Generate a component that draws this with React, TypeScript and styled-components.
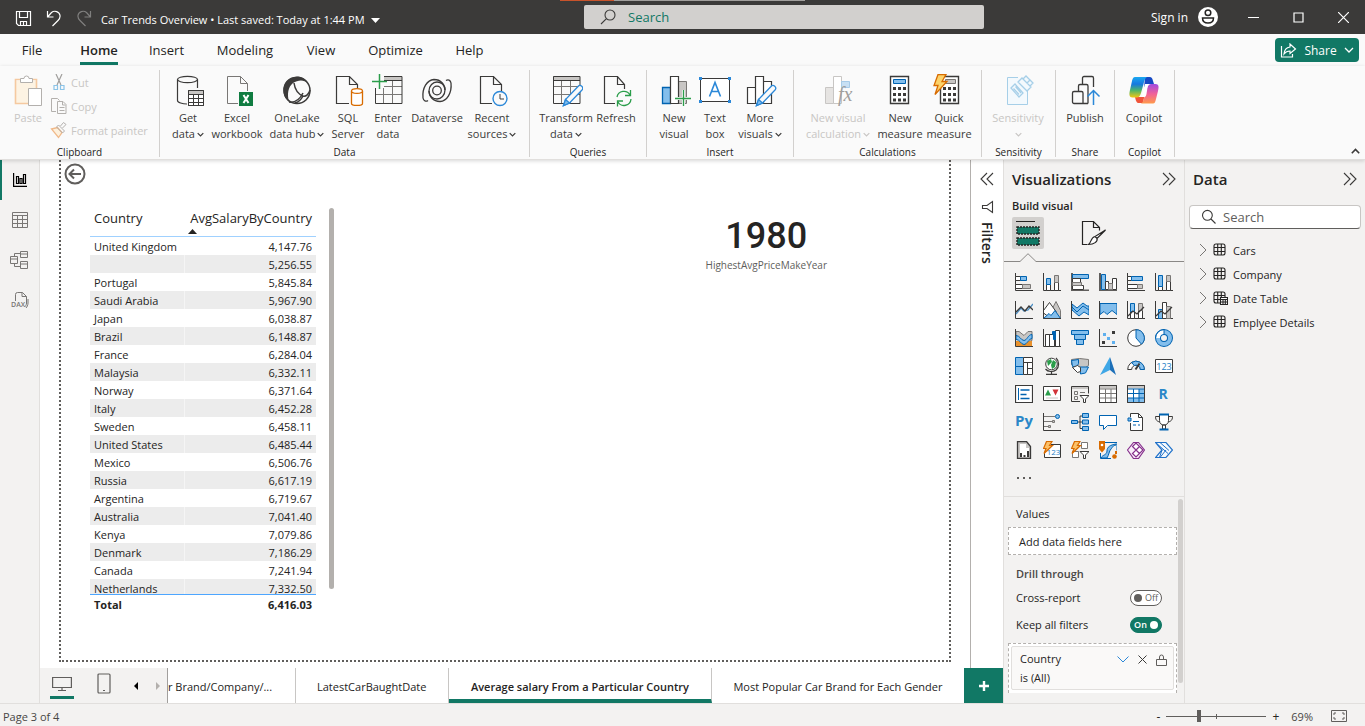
import React from "react";
import styled, { createGlobalStyle, css } from "styled-components";

const green = "#117865";
const ink = "#252423";
const line = "#3b3a39";
const pane = "#f3f2f1";
const blue = "#83beec";
const edge = "#0063b1";
const grey = "#c8c6c4";
const greyEdge = "#797775";
const orange = "#d86b00";

const GlobalStyle = createGlobalStyle`
  * { box-sizing: border-box; }
  body { margin: 0; background: #fff; }
  body, button, input { font-family: "Open Sans", "Noto Sans", sans-serif; font-size: 12px; color: ${ink}; }
  button { border: 0; padding: 0; margin: 0; background: none; cursor: pointer; }
  h2, h3, p, ul { margin: 0; padding: 0; font-weight: 400; }
  svg { display: block; flex: none; }
`;

const Shell = styled.div`
  display: flex;
  flex-direction: column;
  height: 100vh;
  overflow: hidden;
`;

/* ---------- title bar ---------- */
const TitleBar = styled.header`
  display: grid;
  grid-template-columns: 584fr 400fr 381fr;
  align-items: center;
  height: 34px;
  flex: none;
  background: linear-gradient(90deg, transparent 41%, #c8532b 41% 45%, #a19f9d 45% 59%, transparent 59%) 0 0 / 100% 1px no-repeat
    #3b3a39;
  color: #fff;
`;
const QuickAccess = styled.div`
  display: flex;
  align-items: center;
  gap: 14px;
  padding: 2px 0 0 15px;
`;
const BarButton = styled.button<{ $dim?: boolean }>`
  display: flex;
  color: #fff;
  opacity: ${(p) => (p.$dim ? 0.35 : 1)};
`;
const DocTitle = styled.button`
  display: flex;
  align-items: center;
  gap: 6px;
  padding-top: 4px;
  margin-left: -5px;
  color: #fff;
  font-size: 11px;
  line-height: 16px;
  white-space: nowrap;
`;
const TopSearch = styled.label`
  display: flex;
  align-items: center;
  gap: 12px;
  height: 24px;
  padding: 0 16px;
  border-radius: 2px;
  background: #d2d0ce;
`;
const TopSearchInput = styled.input`
  flex: 1;
  border: 0;
  padding: 0;
  background: none;
  outline: 0;
  font-size: 13px;
  &::placeholder { color: ${green}; opacity: 1; }
`;
const WindowControls = styled.div`
  display: flex;
  justify-content: flex-end;
  align-items: center;
  gap: 34px;
  padding-right: 16px;
`;
const SignIn = styled.button`
  display: flex;
  align-items: center;
  gap: 10px;
  color: #fff;
  font-size: 12px;
  margin-right: -4px;
`;

/* ---------- menu and ribbon ---------- */
const Menu = styled.nav`
  display: flex;
  align-items: center;
  flex: none;
  height: 32px;
  padding: 0 6px 0 15px;
  gap: 31px;
  background: #fafafa;
`;
const MenuLink = styled.a<{ $active?: boolean; $w: number }>`
  display: flex;
  justify-content: center;
  width: ${(p) => p.$w}px;
  height: 28px;
  margin-top: 2px;
  padding-top: 3px;
  font-size: 13px;
  line-height: 20px;
  color: ${ink};
  text-decoration: none;
  font-weight: ${(p) => (p.$active ? 600 : 400)};
  border-bottom: 3px solid ${(p) => (p.$active ? green : "transparent")};
`;
const ShareButton = styled.button`
  display: flex;
  align-items: center;
  justify-content: center;
  gap: 7px;
  width: 84px;
  height: 24px;
  margin-left: auto;
  border-radius: 4px;
  background: ${green};
  color: #fff;
  font-size: 12px;
`;
const Ribbon = styled.div`
  position: relative;
  z-index: 2;
  display: flex;
  flex: none;
  height: 94px;
  padding: 4px 0 2px;
  background: #fafafa;
  border-bottom: 1px solid #e1dfdd;
  box-shadow: 0 1px 4px rgba(0, 0, 0, 0.16);
`;
const Group = styled.section<{ $w: number }>`
  display: flex;
  flex-direction: column;
  width: ${(p) => p.$w}px;
  flex: none;
  border-right: 1px solid #d2d0ce;
`;
const GroupBody = styled.div`
  display: flex;
  align-items: flex-start;
  flex: 1;
  min-height: 0;
  padding-left: 6px;
`;
const GroupLabel = styled.h3`
  height: 14px;
  flex: none;
  padding-top: 3px;
  font-size: 10px;
  line-height: 12px;
  text-align: center;
`;
const Tool = styled.button<{ $w: number; $dim?: boolean }>`
  display: flex;
  flex-direction: column;
  align-items: center;
  width: ${(p) => p.$w}px;
  flex: none;
  padding-top: 4px;
  gap: 2px;
  font-size: 11px;
  line-height: 16px;
  white-space: nowrap;
  color: ${(p) => (p.$dim ? "#c8c6c4" : "#3b3a39")};
`;
const ToolText = styled.span`
  display: flex;
  flex-direction: column;
  align-items: center;
`;
const ToolLine = styled.span`
  display: flex;
  align-items: center;
  gap: 2px;
  min-height: 16px;
`;
const SmallTools = styled.div`
  display: flex;
  flex-direction: column;
`;
const SmallTool = styled.button`
  display: flex;
  align-items: center;
  gap: 4px;
  height: 24px;
  font-size: 11px;
  color: #c8c6c4;
`;
const Collapse = styled.button`
  align-self: flex-end;
  margin: 0 5px 3px auto;
`;

/* ---------- work area ---------- */
const Work = styled.div`
  display: flex;
  flex: 1;
  min-height: 0;
`;
const Rail = styled.nav`
  width: 40px;
  flex: none;
  background: ${pane};
  border-right: 1px solid #e1dfdd;
`;
const RailButton = styled.button<{ $active?: boolean }>`
  display: flex;
  align-items: center;
  justify-content: center;
  width: 39px;
  height: 40px;
  padding-right: 2px;
  border-left: 2px solid ${(p) => (p.$active ? green : "transparent")};
  color: ${(p) => (p.$active ? "#000" : "#797775")};
`;
const Center = styled.div`
  display: flex;
  flex-direction: column;
  flex: 1;
  min-width: 0;
`;
const Stage = styled.div`
  display: flex;
  flex: 1;
  min-height: 0;
`;
const PageWrap = styled.main`
  flex: 1;
  min-width: 0;
  padding: 0 19px 6px 19px;
  background: #fff;
`;
const ReportPage = styled.div`
  display: flex;
  align-items: flex-start;
  height: 100%;
  border: 2px dotted #605e5c;
  border-top: 0;
`;
const BackButton = styled.button`
  margin: 3px 0 0 3px;
`;
const TableVisual = styled.div`
  display: flex;
  gap: 13px;
  margin: 48px 0 0 4px;
`;
const Table = styled.table`
  display: flex;
  flex-direction: column;
  width: 226px;
  font-size: 11px;
  color: ${ink};
  thead, tbody, tfoot { display: block; }
  tr { display: grid; grid-template-columns: 94px 1fr; }
  th { font-weight: 400; }
  tbody { height: 359px; overflow: hidden; border-top: 1px solid #a0d1ff; border-bottom: 1px solid #4da6ff; }
  tbody tr:nth-child(even) { background: #ececec; }
  tbody tr:nth-child(even) td:last-child { border-left: 1px solid #f5f5f5; }
  tfoot td { font-weight: 700; }
  th, td { padding: 0 4px; height: 18px; line-height: 19px; text-align: left; white-space: nowrap; }
  th:last-child, td:last-child { text-align: right; }
  thead th { height: 28px; font-size: 13px; line-height: 20px; }
  thead th svg { margin-top: 1px; }
`;
const VScroll = styled.div<{ $h: number; $light?: boolean }>`
  width: 5px;
  height: ${(p) => p.$h}px;
  border-radius: 3px;
  background: ${(p) => (p.$light ? "#d2d0ce" : "#b3b0ad")};
`;
const Card = styled.figure`
  margin: 54px 0 0 auto;
  padding-right: 122px;
  text-align: center;
`;
const CardValue = styled.div`
  font-family: Roboto, sans-serif;
  font-size: 36px;
  font-weight: 500;
  line-height: 44px;
  color: ${ink};
`;
const CardCaption = styled.figcaption`
  font-size: 10px;
  line-height: 14px;
  color: #605e5c;
`;
const Filters = styled.aside`
  display: flex;
  flex-direction: column;
  align-items: center;
  gap: 14px;
  width: 33px;
  flex: none;
  padding-top: 12px;
  border-left: 1px solid #b3b0ad;
  background: #fff;
`;
const FiltersTitle = styled.h2`
  writing-mode: vertical-rl;
  font-size: 14px;
  font-weight: 600;
  line-height: 18px;
  margin-top: -6px;
`;

/* ---------- page tabs ---------- */
const PageTabs = styled.nav`
  display: flex;
  flex: none;
  height: 35px;
  background: #fff;
`;
const Layouts = styled.div`
  display: flex;
  align-items: flex-start;
  gap: 18px;
  width: 128px;
  flex: none;
  padding-left: 10px;
  background: ${pane};
  border-right: 1px solid #a19f9d;
`;
const LayoutButton = styled.button<{ $active?: boolean; $w: number }>`
  display: flex;
  justify-content: center;
  align-items: center;
  width: ${(p) => p.$w}px;
  height: 31px;
  padding-top: 3px;
  border-bottom: 3px solid ${(p) => (p.$active ? green : "transparent")};
`;
const LayoutArrow = styled.button`
  height: 36px;
`;
const PageTab = styled.a<{ $active?: boolean; $grow: number; $clipped?: boolean }>`
  flex: ${(p) => p.$grow} 1 0;
  min-width: 0;
  display: flex;
  justify-content: ${(p) => (p.$clipped ? "flex-start" : "center")};
  padding-top: 4px;
  overflow: hidden;
  white-space: nowrap;
  font-size: 11px;
  line-height: 30px;
  color: ${ink};
  text-decoration: none;
  border-right: 1px solid #c8c6c4;
  ${(p) =>
    p.$active &&
    css`
      font-weight: 600;
      border-bottom: 4px solid ${green};
    `}
  &:last-of-type { border-right: 0; }
`;
const AddPage = styled.button`
  display: flex;
  align-items: center;
  justify-content: center;
  width: 39px;
  flex: none;
  background: ${green};
`;

/* ---------- right panes ---------- */
const Pane = styled.aside<{ $w: number }>`
  display: flex;
  flex-direction: column;
  width: ${(p) => p.$w}px;
  flex: none;
  background: ${pane};
  border-left: 1px solid #e1dfdd;
`;
const PaneHead = styled.div`
  display: flex;
  align-items: center;
  justify-content: space-between;
  height: 38px;
  flex: none;
  padding: 0 8px;
`;
const PaneTitle = styled.h2`
  font-size: 15px;
  font-weight: 600;
`;
const BuildLabel = styled.h3`
  padding-left: 8px;
  font-size: 11px;
  font-weight: 600;
  line-height: 16px;
`;
const BuildTabs = styled.div`
  display: flex;
  gap: 34px;
  padding: 3px 8px 0;
`;
const BuildTab = styled.button<{ $active?: boolean }>`
  display: flex;
  align-items: center;
  justify-content: center;
  width: 32px;
  height: 32px;
  border-radius: 2px;
  background: ${(p) => (p.$active ? "#d2d0ce" : "none")};
`;
const Notch = styled.div`
  display: flex;
  align-items: flex-end;
  height: 14px;
  margin-top: -1px;
  &::before { content: ""; width: 16px; border-bottom: 1px solid #8a8886; }
  &::after { content: ""; flex: 1; border-bottom: 1px solid #8a8886; }
`;
const Gallery = styled.div`
  display: grid;
  grid-template-columns: repeat(6, 28px);
  grid-auto-rows: 28px;
  padding: 6px 0 0 6px;
`;
const VisualButton = styled.button`
  display: flex;
  align-items: center;
  justify-content: center;
`;
const Wells = styled.div`
  display: flex;
  gap: 1px;
  flex: 1;
  min-height: 0;
  margin-top: 4px;
  padding: 2px 1px 8px 4px;
  border-top: 1px solid #e1dfdd;
`;
const WellColumn = styled.div`
  flex: 1;
  min-width: 0;
`;
const WellLabel = styled.h3<{ $bold?: boolean }>`
  padding: 7px 0 0 8px;
  font-size: 11px;
  line-height: 16px;
  height: ${(p) => (p.$bold ? 25 : 28)}px;
  font-weight: ${(p) => (p.$bold ? 600 : 400)};
  color: ${(p) => (p.$bold ? "#484644" : ink)};
`;
const DropZone = styled.div<{ $tall?: boolean }>`
  border: 1px dashed #b3b0ad;
  background: #fff;
  font-size: 11px;
  ${(p) =>
    p.$tall
      ? css`
          padding: 2px;
          height: 50px;
          border-bottom: 0;
          margin-top: 5px;
        `
      : css`
          padding: 0 10px;
          height: 28px;
          line-height: 27px;
          margin-bottom: 4px;
        `}
`;
const SwitchRow = styled.label`
  display: flex;
  align-items: center;
  justify-content: space-between;
  height: 27px;
  padding: 0 15px 0 8px;
  font-size: 11px;
`;
const Switch = styled.span<{ $on?: boolean }>`
  display: flex;
  align-items: center;
  justify-content: center;
  gap: 3px;
  width: 32px;
  height: 16px;
  border: 1px solid ${(p) => (p.$on ? green : "#605e5c")};
  border-radius: 8px;
  background: ${(p) => (p.$on ? green : "#fff")};
  color: ${(p) => (p.$on ? "#fff" : "#605e5c")};
  font-size: 9px;
  font-weight: ${(p) => (p.$on ? 600 : 400)};
  flex-direction: ${(p) => (p.$on ? "row" : "row-reverse")};
  &::after {
    content: "";
    width: 8px;
    height: 8px;
    border-radius: 50%;
    background: ${(p) => (p.$on ? "#fff" : "#605e5c")};
  }
  input { position: absolute; opacity: 0; width: 1px; height: 1px; margin: 0; }
`;
const FilterCard = styled.div`
  display: flex;
  justify-content: space-between;
  height: 44px;
  padding: 2px 6px 0 8px;
  border: 1px solid #e1dfdd;
  border-radius: 2px;
  background: #faf9f8;
  line-height: 19px;
`;
const FilterActions = styled.div`
  display: flex;
  align-items: center;
  gap: 9px;
  height: 21px;
`;
const FieldSearch = styled.label`
  display: flex;
  align-items: center;
  gap: 6px;
  height: 24px;
  margin: 7px 4px 9px;
  padding: 0 11px;
  border: 1px solid #c8c6c4;
  border-bottom-color: #605e5c;
  border-radius: 4px;
  background: #fff;
`;
const FieldSearchInput = styled.input`
  flex: 1;
  min-width: 0;
  border: 0;
  padding: 0;
  outline: 0;
  background: none;
  font-size: 13px;
  &::placeholder { color: #605e5c; opacity: 1; }
`;
const FieldList = styled.ul`
  list-style: none;
`;
const FieldItem = styled.li`
  display: flex;
  align-items: center;
  height: 24px;
`;
const FieldButton = styled.button`
  display: flex;
  align-items: center;
  gap: 5px;
  padding-left: 14px;
  font-size: 11px;
`;

/* ---------- status bar ---------- */
const StatusBar = styled.footer`
  display: flex;
  align-items: center;
  justify-content: space-between;
  height: 23px;
  flex: none;
  padding: 2px 18px 0 3px;
  border-top: 1px solid #e1dfdd;
  background: ${pane};
  color: #484644;
  font-size: 11px;
`;
const Zoom = styled.div`
  display: flex;
  align-items: center;
  gap: 18px;
`;
const ZoomControl = styled.div`
  display: flex;
  align-items: center;
  gap: 6px;
`;
const ZoomLevel = styled.div`
  display: flex;
  align-items: center;
  gap: 12px;
`;
const ZoomRange = styled.input`
  appearance: none;
  width: 100px;
  height: 12px;
  margin: 0;
  background: linear-gradient(#605e5c, #605e5c) 0 50% / 100% 1px no-repeat,
    linear-gradient(#605e5c, #605e5c) 50% 50% / 1px 5px no-repeat;
  &::-webkit-slider-thumb {
    appearance: none;
    width: 4px;
    height: 12px;
    background: #605e5c;
  }
`;

/* ---------- small glyphs ---------- */
const Chevron = ({ w = 7, sw = 1.4 }: { w?: number; sw?: number }) => (
  <svg width={w} height={w} viewBox="0 0 8 8" fill="none" stroke="currentColor" strokeWidth={sw}>
    <path d="M.8 2.4 4 5.6 7.2 2.4" />
  </svg>
);
const DoubleChevron = ({ left }: { left?: boolean }) => (
  <svg width="14" height="14" viewBox="0 0 14 14" fill="none" stroke={line} strokeWidth="1.1">
    <path d={left ? "M7 1 1 7l6 6M13 1 7 7l6 6" : "M1 1l6 6-6 6M7 1l6 6-6 6"} />
  </svg>
);
const Magnifier = ({ flip }: { flip?: boolean }) => (
  <svg width="16" height="16" viewBox="0 0 16 16" fill="none" stroke={line} strokeWidth="1.1">
    {flip ? <path d="M1 15l5.2-5.2M5 6a5 5 0 1 0 10 0A5 5 0 0 0 5 6z" /> : <path d="M14.5 14.5 10 10M1.5 6.3a4.9 4.9 0 1 0 9.8 0 4.9 4.9 0 0 0-9.8 0z" />}
  </svg>
);

/* ---------- ribbon icons (34 x 34) ---------- */
const R = ({ children }: { children: React.ReactNode }) => (
  <svg width="34" height="34" viewBox="0 0 34 34" fill="none" stroke={line}>
    {children}
  </svg>
);
const Pencil = ({ dx = 0 }: { dx?: number }) => (
  <g transform={`translate(${dx} 0)`} stroke="#2b88d8" strokeWidth="1.3">
    <path d="M14.5 31.5l2-6L29 12.5a2.6 2.6 0 0 1 4 3.500L20.5 29z" fill="#fafafa" />
    <path d="M14.5 31.5l2-6 4 3.500z" fill={blue} />
  </g>
);
const Grid = (
  <>
    <path d="M4 2h27v4H4z" fill={grey} stroke="none" />
    <path d="M4 12.5h27M4 20.5h27M12.5 6v23M21.5 6v23" stroke={greyEdge} />
    <path d="M4.5 2.5h26.5v27H4.5zM4 6.5h27" />
  </>
);
const icons = {
  paste: (
    <svg width="34" height="34" viewBox="0 0 34 34" fill="none">
      <path d="M5 7h20v23H5z" fill="#fdf3e3" />
      <path d="M9 5.5H4.500v24H17M22 5.5h3.500V14" stroke="#f5c9a0" strokeWidth="1.600" />
      <path d="M9.5 8.5v-4h3.500a2.500 2.500 0 0 1 5 0h3.500v4z" fill="#fff" stroke="#b3b0ad" />
      <path d="M17.500 14.500h13v17h-13z" fill="#fff" stroke="#b3b0ad" />
    </svg>
  ),
  getData: (
    <R>
      <path d="M6.500 5.500v21c0 2 5 3.500 9.500 3.500M26.500 14V5.500" strokeWidth="1.200" />
      <ellipse cx="16.500" cy="5.500" rx="10" ry="3.200" strokeWidth="1.200" />
      <path d="M17.500 16.500h15v15h-15z" fill="#fff" />
      <path d="M18 17h14v3H18z" fill={grey} stroke="none" />
      <path d="M17.500 20.500h15M17.500 24.500h15M17.500 28.500h15M22.500 20v12M27.500 20v12M17.500 16.500h15v15h-15z" />
    </R>
  ),
  excel: (
    <R>
      <path d="M18 29.500H7.500v-27h13l7 7V17M20.500 2.500v7h7" stroke={greyEdge} />
      <path d="M19 18h14v14H19z" fill="#107c41" stroke="none" />
      <path d="M23.500 21l5 8M28.500 21l-5 8" stroke="#fff" strokeWidth="2" />
    </R>
  ),
  oneLake: (
    <R>
      <circle cx="17" cy="16.500" r="13" strokeWidth="1.500" />
      <path d="M17 2.500C8 3 2.500 9 3.500 18c.7 5 3 7.500 5.500 10C7 20 8 13 13 9c5-3.500 11-3.500 15 0-2-4-6-6.500-11-6.500z" fill={line} stroke="none" />
      <path d="M9 28c7 1 11-3 14-9M14 9c1 7 4 11 9 13 3 1 6-2 7-6M23 22c-1.500 3-4 6-8 7" strokeWidth="1.500" />
    </R>
  ),
  sql: (
    <R>
      <path d="M18 29.500H5.500v-27h13l8 8V14M18.500 2.500v8h8" strokeWidth="1.200" />
      <path d="M20.500 17v12.500c0 2.600 11 2.600 11 0V17" fill="#fff" stroke={orange} strokeWidth="1.300" />
      <ellipse cx="26" cy="17" rx="5.500" ry="2.400" fill="#fff" stroke={orange} strokeWidth="1.300" />
    </R>
  ),
  enter: (
    <R>
      {Grid}
      <path d="M0 0h13v14H0z" fill="#fafafa" stroke="none" />
      <path d="M4.5 14v15" />
      <path d="M1 7.500h15M8.500 0v15" stroke="#2a9d4a" strokeWidth="1.500" />
    </R>
  ),
  dataverse: (
    <R>
      <g strokeWidth="1.300">
        <circle cx="17" cy="16.500" r="4.300" />
        <path d="M8 26.500c-2 1.500-4.500.5-5-2.500C2 14 7 6 14 5.500c7 0 11 5 11 10.500s-4 9-8 9-8-3-8-8" />
        <path d="M26 6.500c2-1.500 4.500-.5 5 2.500 1 10-4 18-11 18.500-7 0-11-5-11-10.500s4-9 8-9 8 3 8 8" />
      </g>
    </R>
  ),
  recent: (
    <R>
      <path d="M17 29.500H5.500v-27h13l8 8V17M18.500 2.500v8h8" strokeWidth="1.200" />
      <circle cx="25" cy="24.500" r="7" fill="#fafafa" stroke="#2b88d8" strokeWidth="1.400" />
      <path d="M25 20v5h4" />
    </R>
  ),
  transform: (
    <R>
      {Grid}
      <Pencil />
    </R>
  ),
  refresh: (
    <R>
      <path d="M16 29.500H5.500v-27h13l7 8V15M18.500 2.500v8h7" strokeWidth="1.200" />
      <path d="M18 23a7 7 0 0 1 13-2M32 25a7 7 0 0 1-13 3M31.500 16v5.500H26M18.500 32.500V27H24" stroke="#2a9d4a" strokeWidth="1.300" />
    </R>
  ),
  newVisual: (
    <R>
      <path d="M21.500 7.500h8v22h-8z" fill={grey} stroke={greyEdge} />
      <path d="M5.500 13.500h8v16h-8z" fill={blue} stroke={edge} strokeWidth="1.300" />
      <path d="M13.500 2.500h8v27h-8z" fill="#fff" strokeWidth="1.200" />
      <path d="M26.500 16v16M18 24.500h16" stroke="#fafafa" strokeWidth="3" />
      <path d="M26.500 16v16M18 24.500h16" stroke="#2a9d4a" strokeWidth="1.300" />
    </R>
  ),
  textBox: (
    <R>
      <path d="M2.500 4.500h29v23h-29z" fill="#fff" />
      <path d="M1 3h3v3H1zM30 3h3v3h-3zM1 26h3v3H1zM30 26h3v3h-3z" fill="#2b88d8" stroke="none" />
      <path d="M11.500 22.500l5.500-14 5.500 14M13.500 17.500h7" stroke="#2b88d8" strokeWidth="1.600" />
    </R>
  ),
  moreVisuals: (
    <R>
      <path d="M4.500 13.500h8v16h-8zM20.500 7.500h8v22h-8zM12.500 2.500h8v27h-8z" fill="#fff" strokeWidth="1.200" />
      <Pencil dx={-1} />
    </R>
  ),
  visualCalc: (
    <R>
      <path d="M4.500 13.500h8v16h-8z" fill="#e6e4e2" stroke="#c8c6c4" />
      <path d="M12.500 2.500h8v27h-8z" fill="#fff" stroke="#c8c6c4" />
      <path d="M20.500 7.500h8v6h-8z" fill="#c7e0f4" stroke="#a6cbe8" />
      <text x="17" y="27" fontFamily="Liberation Serif, serif" fontStyle="italic" fontSize="20" fill="#a19f9d" stroke="none">
        fx
      </text>
    </R>
  ),
  measure: (
    <R>
      <path d="M7.500 2.500h18v27h-18z" fill="#fff" strokeWidth="1.400" />
      <path d="M10.500 5.500h12v4h-12z" fill={blue} stroke={edge} />
      <path d="M10 14.500h13M10 20.500h13M10 26h13" strokeWidth="3" strokeDasharray="3 2" />
    </R>
  ),
  quick: (
    <R>
      <path d="M8.500 2.500h18v27h-18z" fill="#fff" strokeWidth="1.400" />
      <path d="M13.500 5.500h10v4h-10z" fill={grey} stroke={greyEdge} />
      <path d="M11 14.500h13M11 20.500h13M11 26h13" strokeWidth="3" strokeDasharray="3 2" />
      <path d="M6 .5h8l-4 7h5l-12 13 3-9H2z" fill="#fcd36b" stroke={orange} strokeWidth="1.300" />
    </R>
  ),
  sensitivity: (
    <R>
      <path d="M17 3.500H6.500v27h20V17" fill="#f3f9fd" stroke="#a6cfe8" />
      <path d="M10 14l4-4 8 9-4 4zM12.500 14.500l5.500 6M14.500 12.500l5.500 6.500" stroke="#a6cfe8" strokeWidth="1.300" />
      <path d="M17 8l4-4 9 9-4 4zM22 5l3-3 4 4-2 2M26 9l3-3 3 3-3 3" fill="#f3f9fd" stroke="#a6cfe8" strokeWidth="1.300" />
    </R>
  ),
  publish: (
    <R>
      <g strokeWidth="1.300">
        <path d="M20 29.500H6a1.500 1.500 0 0 1-1.500-1.500V19a1.500 1.500 0 0 1 1.500-1.500h7.500a1.500 1.500 0 0 1 1.500 1.500v10.500M10.500 17.500V12A1.500 1.500 0 0 1 12 10.500h6.500A1.500 1.500 0 0 1 20 12v17.500M14.500 10.500V4A1.500 1.500 0 0 1 16 2.500h8A1.500 1.500 0 0 1 25.500 4v9" />
        <path d="M25.500 31V17M19.500 22.500l6-6 6 6" stroke="#2b88d8" strokeWidth="1.500" />
      </g>
    </R>
  ),
  copilot: (
    <svg width="34" height="34" viewBox="0 0 34 34">
      <defs>
        <linearGradient id="cpA" x1="0" y1="0" x2="0" y2="1">
          <stop offset="0" stopColor="#1aa7f0" />
          <stop offset=".35" stopColor="#1578e0" />
          <stop offset=".65" stopColor="#4cb56a" />
          <stop offset="1" stopColor="#f2c811" />
        </linearGradient>
        <linearGradient id="cpB" x1="0" y1="0" x2="0" y2="1">
          <stop offset="0" stopColor="#a04be0" />
          <stop offset=".5" stopColor="#f0609a" />
          <stop offset="1" stopColor="#ff9a4a" />
        </linearGradient>
      </defs>
      <path d="M18 3h4.500c2.500 0 3 2 3.500 4l1 3h-7l-3 4z" fill="#1649c4" />
      <path d="M16 29h-4c-2.500 0-3-2-4-6h7l3-4z" fill="#f0553a" />
      <path d="M8 3h12c-2 1-2.500 3-3.500 7l-2.500 9c-1 3-2 4.500-4.500 4.500H5.500C2 23.500 2 20 3 16l2-9c.7-2.500 1.300-4 3-4z" fill="url(#cpA)" />
      <path d="M26 29.500H14c2-1 2.500-3 3.500-7l2.500-8c1-3 2-4.500 4.500-4.500h4c3.500 0 3.500 3 2.500 7l-2 8c-.7 3-1.300 4.500-3 4.500z" fill="url(#cpB)" />
      <path d="M21 10h-3l-3.500 13h3c1 0 1.500-1 2-3z" fill="#fff" />
    </svg>
  ),
};

/* ---------- visual gallery icons (18 x 18) ---------- */
const axis = <path d="M.5 0v17.5H18" />;
const B = { fill: blue, stroke: edge };
const G = { fill: grey, stroke: greyEdge };
const W = { fill: "#fff" };
const glyphText = { fontFamily: "Open Sans, sans-serif", stroke: "none" };
const bolt = <path d="M3.5 .5h5.500L6.500 4.500h3L1 12.500l2-5H.5z" fill="#fcc168" stroke={orange} strokeWidth="1.200" />;
const funnel = <path d="M9 10.500h9l-3.500 3.500v3.500h-2V14z" fill="#fff" />;

const gallery: [string, React.ReactNode][] = [
  ["Stacked bar chart", <>{axis}<path d="M.5 3.500h5v4h-5zM.5 11.500h7v4h-7z" {...W} /><path d="M5.500 3.500h6v4h-6z" {...B} /><path d="M7.500 11.500h8v4h-8z" {...G} /></>],
  ["Stacked column chart", <>{axis}<path d="M3.500 11.500h4v6h-4zM11.500 9.500h4v8h-4z" {...W} /><path d="M3.500 5.500h4v6h-4z" {...B} /><path d="M11.500 2.500h4v7h-4z" {...G} /></>],
  ["Clustered bar chart", <><path d="M1 0v17.500h17.500" strokeWidth="2" stroke="#605e5c" /><path d="M1.500 1.500h16v4h-16z" {...B} /><path d="M1.500 5.500h8v4h-8zM1.500 12.500h11v4h-11z" {...W} /><path d="M1.500 9.500h9v3h-9z" {...G} /></>],
  ["Clustered column chart", <><path d="M1 0v17.500h17.500" strokeWidth="2" stroke="#605e5c" /><path d="M2.500 1.500h4v15h-4z" {...B} /><path d="M6.500 8.500h3v8h-3zM13.500 5.500h4v11h-4z" {...W} /><path d="M9.500 10.500h4v6h-4z" {...G} /></>],
  ["100% stacked bar chart", <>{axis}<path d="M.5 3.500h4v4h-4zM.5 11.500h10v4H.5z" {...W} /><path d="M4.500 3.500h11v4h-11z" {...B} /><path d="M10.500 11.500h5v4h-5z" {...G} /></>],
  ["100% stacked column chart", <>{axis}<path d="M3.500 13.500h4v4h-4zM11.500 8.500h4v9h-4z" {...W} /><path d="M3.500 2.500h4v11h-4z" {...B} /><path d="M11.500 2.500h4v6h-4z" {...G} /></>],

  ["Line chart", <>{axis}<path d="M1 13l5-6 3 3 4-1 5-6" stroke={edge} strokeWidth="1.300" opacity=".7" /><path d="M1 11l5-5 4 4 4-5 4 4" strokeWidth="1.300" /></>],
  ["Area chart", <><path d="M8 10l5-9.500 4.500 9v8H8z" {...G} /><path d="M.5 12V9.500l6-8 6.500 9-5 7z" {...W} /><path d="M.5 17.500l5.500-5 2 2 4-5 5.500 8z" {...B} /><path d="M.5 0v17.500H18" /></>],
  ["Stacked area chart", <><path d="M1 3l5 4 6-5 4 3h2v9l-5-3-5 4-7-6z" {...B} /><path d="M1 6l5 5 6-6 6 4" stroke={edge} /><path d="M.5 0v17.500H18" /></>],
  ["100% stacked area chart", <><path d="M1 2.500h17v11l-5-4-5 4-3-3-4 3z" {...B} /><path d="M.5 0v17.500H18" /></>],
  ["Line and stacked column chart", <>{axis}<path d="M3.500 10.500h4v7h-4zM11.500 9.500h4v8h-4z" {...W} /><path d="M3.500 2.500h4v8h-4z" {...B} /><path d="M11.500 2.500h4v7h-4z" {...G} /><path d="M1 15l5-5 4 3 7-7" strokeWidth="1.300" /></>],
  ["Line and clustered column chart", <>{axis}<path d="M3.500 8.500h4v9h-4z" {...B} /><path d="M7.500 1.500h4v16h-4z" {...W} /><path d="M11.500 5.500h4v12h-4z" {...G} /><path d="M1 15l5-5 4 3 7-7" strokeWidth="1.300" /></>],

  ["Ribbon chart", <><path d="M1 12h16v5H1z" fill="#e8912d" stroke="none" /><path d="M1 2.500h3l5 4 4-4h4v9l-4-1-4 4-4-4H1z" {...G} /><path d="M1 6.500c4 0 5 5 8 5s4-6 8-6v4c-3 0-5 6-8 6s-4-5-8-5z" {...B} /><path d="M.5 0v17.500H18" /></>],
  ["Waterfall chart", <>{axis}<path d="M2.500 5.500h4v12h-4zM6.500 5.500h5v12h-5zM12.500 1.500h4v16h-4z" {...W} /><path d="M9.500 2.500h3v8h-2v-5h-1z" fill={edge} stroke={edge} /></>],
  ["Funnel", <><path d="M.5 1.500h17v4H.5zM3.500 5.500h11v5h-11zM5.500 10.500h7v5h-7z" {...B} /></>],
  ["Scatter chart", <>{axis}<path d="M3 12h3v3H3zM13 2h3v3h-3z" fill={line} stroke="none" /><path d="M4 4h3v3H4zM8 8h3v3H8zM13 12h3v3h-3z" fill="#5fb0ee" stroke="none" /></>],
  ["Pie chart", <><circle cx="9" cy="9" r="8.300" fill="#fff" /><path d="M9 9V.7a8.300 8.300 0 0 1 5.500 14.500z" {...B} /></>],
  ["Donut chart", <><circle cx="9" cy="9" r="6" stroke={edge} strokeWidth="6" /><circle cx="9" cy="9" r="6" stroke={blue} strokeWidth="4" /><path d="M3 9a6 6 0 0 1 6-6" stroke="#fff" strokeWidth="4" /><path d="M.6 9A8.400 8.400 0 0 1 9 .6M9 .6V6" stroke={edge} /></>],

  ["Treemap", <><path d="M.5.5h8v9h-8zM.5 9.500h8v8h-8z" {...B} /><path d="M8.500.5h9v5h-9zM8.500 5.500h4v12h-4zM12.500 5.500h5v6h-5zM12.500 11.500h5v6h-5z" {...W} /></>],
  ["Map", <><circle cx="8.500" cy="7" r="5.800" fill="#fff" /><path d="M4 4l4-2 1 3-4 4zM10 3l3 2-1 5-3 2-1-4z" fill="#2a9d4a" stroke="none" /><path d="M13 1c3.500 3 3.500 9 0 12-3 2.300-8 2-10.500-1M8.500 14v3M3 17.300h11" strokeWidth="1.200" /></>],
  ["Filled map", <><path d="M.5 2.500l8-1 9 1v6l-7 5-10-6z" {...G} /><path d="M.5 3.500l7-1v4l-2 4-4-1zM9 10h8.500l-3 6-5 1z" {...B} /><path d="M1.500 10.500l5 5 3-1v-4l-3-2z" {...W} /></>],
  ["Azure map", <><path d="M11 0l6 18-6-5z" fill="#1c6fb8" stroke="none" /><path d="M11 0L1 18l10-5z" fill="#3fa7e6" stroke="none" /></>],
  ["Gauge", <><path d="M.7 12.500a8.300 8.300 0 0 1 16.600 0h-4a4.300 4.300 0 0 0-8.600 0z" fill="#fff" /><path d="M4.500 5.500a8.300 8.300 0 0 1 12.800 7h-4a4.300 4.300 0 0 0-6-4z" {...B} /><path d="M8.500 12.500l4-6" strokeWidth="2" /></>],
  ["Card", <><path d="M.5 2.500h17v13H.5z" fill="#fff" /><text x="9" y="12.500" fontSize="9" textAnchor="middle" fill="#1f7fc7" {...glyphText}>123</text></>],

  ["Multi-row card", <><path d="M.5.5h17v17H.5z" fill="#fff" strokeWidth="1.200" /><path d="M3.500 3v12" stroke={edge} /><path d="M5.500 5h9M5.500 9.500h6M5.500 13.500h9" stroke={edge} strokeWidth="1.600" /></>],
  ["KPI", <><path d="M.5 1.500h17v14H.5z" fill="#fff" /><path d="M2 10.500l3-6 3 6z" fill="#2a9d4a" stroke="none" /><path d="M9.500 4.500h6l-3 6z" fill="#d13438" stroke="none" /><path d="M3 13h12" stroke={grey} /></>],
  ["Slicer", <><path d="M9 16.500H.5v-15h17v7" /><path d="M1 2h16v2H1z" fill={grey} stroke="none" /><path d="M3.500 6.500h3v3h-3zM3.500 11.500h3v3h-3zM9 7.500h5" stroke={greyEdge} />{funnel}</>],
  ["Table", <><path d="M.5.5h17v17H.5z" fill="#fff" /><path d="M1 1h16v2.500H1z" fill={grey} stroke="none" /><path d="M.5 8.500h17M.5 13h17M6.500 4v13M12 4v13M.5 4h17" stroke={greyEdge} /><path d="M.5.5h17v17H.5z" /></>],
  ["Matrix", <><path d="M.5.5h17v17H.5z" fill="#fff" /><path d="M1 1h16v2.500H1z" fill={grey} stroke="none" /><path d="M12 4h5v13H1v-4h11z" fill={blue} stroke="none" /><path d="M.5 8.500h17M.5 13h17M6.500 4v13M12 4v13M.5 4h17" stroke={edge} /><path d="M.5.5h17v17H.5z" /></>],
  ["R script visual", <text x="8" y="14" fontSize="14" fontWeight="700" textAnchor="middle" fill="#2a87c8" {...glyphText}>R</text>],

  ["Python visual", <text x="9" y="13" fontSize="15" fontWeight="700" textAnchor="middle" fill="#2a87c8" {...glyphText}>Py</text>],
  ["Key influencers", <>{axis}<path d="M1 3.500h11M1 8.500h8M1 13.500h4" stroke={greyEdge} /><circle cx="14.500" cy="3.500" r="2" {...B} /><path d="M9.500 7.500h2v2h-2zM5.500 12.500h2v2h-2z" {...G} /></>],
  ["Decomposition tree", <><path d="M6 9h5.500M9 3v12.500h3M9 3h3" /><path d="M.5 7.500h6v3h-6zM11.500.5h6v4h-6zM11.500 7h6v4h-6zM11.500 13.500h6v4h-6z" {...B} /></>],
  ["Q&A", <path d="M.5 2.500h17v10h-9l-4 4v-4h-4z" fill="#fff" stroke={edge} />],
  ["Narrative", <><path d="M3.500 4V.5h8l4 4v13h-12V10" fill="#fff" /><path d="M11.500.5v4h4" /><path d="M1 5h3v3H1z" {...B} /><path d="M6 8.500h6M6 12h3M11 12h2" stroke={edge} /></>],
  ["Metrics", <><path d="M4.500 3.500H.5c0 4 2 5 4.500 5.500M13.500 3.500h4c0 4-2 5-4.500 5.500" /><path d="M4.500 1.500h9v6c0 3-2 4.500-4.500 4.500s-4.500-1.500-4.500-4.500zM7.500 12h3v4h-3z" fill="#fff" /><path d="M4 1.500h10" stroke={edge} strokeWidth="2" /><path d="M4.500 16.500h9" strokeWidth="2" stroke={edge} /></>],

  ["Paginated report", <><path d="M2.500.5h9l4 5v12h-13z" fill={grey} strokeWidth="1.300" /><path d="M5 3h6v4h3v9H5z" fill="#fff" stroke="none" /><path d="M6 16v-4M9.500 16v-2M13 16v-6" strokeWidth="2" /></>],
  ["Card (new)", <><path d="M8 3.500h9.500v13H1.500V11" fill="#fff" /><text x="10.500" y="14" fontSize="8" textAnchor="middle" fill="#1f7fc7" {...glyphText}>123</text>{bolt}</>],
  ["Slicer (new)", <><path d="M10.500 1.500h6v6h-6zM1.500 10.500h6v6h-6z" fill="#fff" stroke={greyEdge} />{bolt}{funnel}</>],
  ["ArcGIS Maps", <><path d="M6 1.500h12v8M12 17.500H1.500V12" stroke={edge} /><path d="M17 4c-4 1-3 2-5 4s-2 6-4 9H2c1-3 6-3 6-7s3-6 9-7z" {...B} /><path d="M0 0h6v8l-3 3.500L0 8z" fill={orange} stroke="none" /><circle cx="3" cy="4" r="1.300" fill="#fff" stroke="none" /><circle cx="15.500" cy="15.500" r="2.300" fill={orange} stroke="none" /><path d="M16 10h3v3h-3z" fill={orange} stroke="none" /></>],
  ["Power Apps", <g stroke="#86308c" strokeWidth="1.200"><path d="M6.500 1.500h5l6 7.500-6 8.500h-5L.5 9z" fill="#f9eef9" /><path d="M9 9L5.500 5.500 9 2l3.500 3.500zM9 9l3.500-3.500L16 9l-3.500 3.500zM9 9l3.500 3.500L9 16l-3.500-3.500z" fill="#fff" /></g>],
  ["Power Automate", <><path d="M.5 1.500H11l6.500 7.500-6.500 7.500H.5L7 9z" fill="#f3f8fd" stroke="#2071c9" strokeWidth="1.200" /><path d="M.5 1.500L13 12.500M5 1.500l9 8M7 9l-2.500 7.500M11 9l-6 7.500" stroke="#2071c9" /></>],
];

/* ---------- data ---------- */
const rows: [string, string][] = [
  ["United Kingdom", "4,147.76"], ["", "5,256.55"], ["Portugal", "5,845.84"], ["Saudi Arabia", "5,967.90"],
  ["Japan", "6,038.87"], ["Brazil", "6,148.87"], ["France", "6,284.04"], ["Malaysia", "6,332.11"],
  ["Norway", "6,371.64"], ["Italy", "6,452.28"], ["Sweden", "6,458.11"], ["United States", "6,485.44"],
  ["Mexico", "6,506.76"], ["Russia", "6,617.19"], ["Argentina", "6,719.67"], ["Australia", "7,041.40"],
  ["Kenya", "7,079.86"], ["Denmark", "7,186.29"], ["Canada", "7,241.94"], ["Netherlands", "7,332.50"],
];

type ToolDef = { icon: keyof typeof icons; lines: string[]; w: number; menu?: boolean; dim?: boolean };
const groups: { name: string; w: number; tools: ToolDef[] }[] = [
  { name: "Data", w: 370, tools: [
    { icon: "getData", lines: ["Get", "data"], w: 44, menu: true },
    { icon: "excel", lines: ["Excel", "workbook"], w: 54 },
    { icon: "oneLake", lines: ["OneLake", "data hub"], w: 66, menu: true },
    { icon: "sql", lines: ["SQL", "Server"], w: 36 },
    { icon: "enter", lines: ["Enter", "data"], w: 44 },
    { icon: "dataverse", lines: ["Dataverse"], w: 54 },
    { icon: "recent", lines: ["Recent", "sources"], w: 56, menu: true },
  ] },
  { name: "Queries", w: 117, tools: [
    { icon: "transform", lines: ["Transform", "data"], w: 60, menu: true },
    { icon: "refresh", lines: ["Refresh"], w: 40 },
  ] },
  { name: "Insert", w: 147, tools: [
    { icon: "newVisual", lines: ["New", "visual"], w: 42 },
    { icon: "textBox", lines: ["Text", "box"], w: 40 },
    { icon: "moreVisuals", lines: ["More", "visuals"], w: 50, menu: true },
  ] },
  { name: "Calculations", w: 188, tools: [
    { icon: "visualCalc", lines: ["New visual", "calculation"], w: 76, menu: true, dim: true },
    { icon: "measure", lines: ["New", "measure"], w: 48 },
    { icon: "quick", lines: ["Quick", "measure"], w: 50 },
  ] },
  { name: "Sensitivity", w: 74, tools: [{ icon: "sensitivity", lines: ["Sensitivity", ""], w: 60, menu: true, dim: true }] },
  { name: "Share", w: 59, tools: [{ icon: "publish", lines: ["Publish"], w: 46 }] },
  { name: "Copilot", w: 60, tools: [{ icon: "copilot", lines: ["Copilot"], w: 46 }] },
];

const FieldIcon = ({ calc }: { calc?: boolean }) => (
  <svg width="15" height="14" viewBox="0 0 15 14" fill="none" stroke={ink} strokeWidth="1.1">
    <rect x="1" y="1" width="11" height="11" rx="2" />
    <path d="M1 4.5h11M1 8.5h11M4.7 1v11M8.3 1v11" />
    {calc && <path d="M7.5 6.5h7v7h-7zM7.5 8.5h7M7.5 11h7M10 8v6M12.3 8v6" fill="#fff" />}
  </svg>
);

export default function App() {
  return (
    <Shell>
      <GlobalStyle />
      <TitleBar>
        <QuickAccess>
          <BarButton aria-label="Save">
            <svg width="17" height="17" viewBox="0 0 17 17" fill="none" stroke="currentColor" strokeWidth="1.2">
              <path d="M1.5 1.5h14v14h-12l-2-2zM4.5 1.5v6h8v-6M5.5 15.5v-4h6v4M8.5 12v3" />
            </svg>
          </BarButton>
          <BarButton aria-label="Undo">
            <svg width="16" height="17" viewBox="0 0 16 17" fill="none" stroke="currentColor" strokeWidth="1.2">
              <path d="M1.5 1v6h6M1.5 7l4-4.5c3-2.500 8-1 8.500 3 .3 2-1 4-2 5L6.500 16" />
            </svg>
          </BarButton>
          <BarButton aria-label="Redo" $dim>
            <svg width="16" height="17" viewBox="0 0 16 17" fill="none" stroke="currentColor" strokeWidth="1.2">
              <path d="M14.5 1v6h-6M14.5 7l-4-4.500c-3-2.500-8-1-8.500 3-.3 2 1 4 2 5L9.500 16" />
            </svg>
          </BarButton>
          <DocTitle>
            Car Trends Overview • Last saved: Today at 1:44 PM
            <svg width="9" height="5" viewBox="0 0 9 5"><path d="M0 0h9L4.5 5z" fill="#fff" /></svg>
          </DocTitle>
        </QuickAccess>
        <TopSearch>
          <Magnifier flip />
          <TopSearchInput placeholder="Search" aria-label="Search commands" />
        </TopSearch>
        <WindowControls>
          <SignIn>
            Sign in
            <svg width="20" height="20" viewBox="0 0 20 20">
              <circle cx="10" cy="10" r="10" fill="#fff" />
              <g fill="none" stroke="#252423" strokeWidth="1.5">
                <circle cx="10" cy="5.8" r="2.8" />
                <path d="M4.5 11h11c0 3.500-2.500 5-5.500 5s-5.500-1.500-5.500-5z" />
              </g>
            </svg>
          </SignIn>
          <BarButton aria-label="Minimize"><svg width="11" height="11" viewBox="0 0 11 11"><path d="M0 5.5h11" stroke="#fff" /></svg></BarButton>
          <BarButton aria-label="Maximize"><svg width="11" height="11" viewBox="0 0 11 11"><path d="M1 1h9v9H1z" fill="none" stroke="#fff" strokeWidth="1.2" /></svg></BarButton>
          <BarButton aria-label="Close"><svg width="11" height="11" viewBox="0 0 11 11"><path d="M0 0l11 11M11 0L0 11" stroke="#fff" strokeWidth="1.2" /></svg></BarButton>
        </WindowControls>
      </TitleBar>

      <Menu>
        <MenuLink href="#" $w={34}>File</MenuLink>
        <MenuLink href="#" $w={38} $active>Home</MenuLink>
        <MenuLink href="#" $w={35}>Insert</MenuLink>
        <MenuLink href="#" $w={60}>Modeling</MenuLink>
        <MenuLink href="#" $w={30}>View</MenuLink>
        <MenuLink href="#" $w={57}>Optimize</MenuLink>
        <MenuLink href="#" $w={29}>Help</MenuLink>
        <ShareButton>
          <svg width="17" height="15" viewBox="0 0 17 15" fill="none" stroke="#fff" strokeWidth="1.2">
            <path d="M1.5 3v11h11v-3M10 4V1l5.500 5L10 10.500V8C7 8 5.500 9 4 11c.3-4 2.500-6.500 6-7z" />
          </svg>
          Share
          <Chevron w={10} sw={1} />
        </ShareButton>
      </Menu>

      <Ribbon>
        <Group $w={160}>
          <GroupBody>
            <Tool $w={44} $dim>
              {icons.paste}
              <ToolText>Paste</ToolText>
            </Tool>
            <SmallTools>
              <SmallTool>
                <svg width="17" height="17" viewBox="0 0 17 17" fill="none" stroke="#a19f9d" strokeWidth="1.2">
                  <path d="M6 0l5 11M12 0L7 11" />
                  <path d="M4 11.5h3.500v4H4zM10.500 11.5H14v4h-3.500z" stroke="#8cc4e8" />
                </svg>
                Cut
              </SmallTool>
              <SmallTool>
                <svg width="17" height="17" viewBox="0 0 17 17" fill="none" stroke="#b3b0ad">
                  <path d="M6 13.5H1.500V.5h6l2 2" />
                  <path d="M7.500 3.5h5.500l3 3v9H7.500zM12.500 4v3h3M9.500 9.500h5M9.500 12.500h5" />
                </svg>
                Copy
              </SmallTool>
              <SmallTool>
                <svg width="17" height="17" viewBox="0 0 17 17" fill="none" stroke="#b3b0ad">
                  <path d="M1.5 7l6-1.500 4.500 5-3.500 5z" fill="#fdf0dc" stroke="#f0b98a" strokeWidth="1.300" />
                  <path d="M6.500 5l2-2 6 6-2 2zM10.500 4l3-3.500 2.500 2-3.500 3.500" />
                </svg>
                Format painter
              </SmallTool>
            </SmallTools>
          </GroupBody>
          <GroupLabel>Clipboard</GroupLabel>
        </Group>
        {groups.map((g) => (
          <Group key={g.name} $w={g.w}>
            <GroupBody>
              {g.tools.map((t) => (
                <Tool key={t.icon} $w={t.w} $dim={t.dim}>
                  {icons[t.icon]}
                  <ToolText>
                    {t.lines.map((l, i) => (
                      <ToolLine key={i}>
                        {l}
                        {t.menu && i === t.lines.length - 1 && <Chevron />}
                      </ToolLine>
                    ))}
                  </ToolText>
                </Tool>
              ))}
            </GroupBody>
            <GroupLabel>{g.name}</GroupLabel>
          </Group>
        ))}
        <Collapse aria-label="Collapse ribbon">
          <svg width="9" height="6" viewBox="0 0 9 6" fill="none" stroke={line} strokeWidth="1.6"><path d="M.8 5.2l3.700-3.700 3.700 3.700" /></svg>
        </Collapse>
      </Ribbon>

      <Work>
        <Rail>
          <RailButton $active aria-label="Report view">
            <svg width="14" height="14" viewBox="0 0 14 14" fill="none" stroke="currentColor" strokeWidth="1.2">
              <path d="M.6 0v13.400H14M3.500 3.500h2v7h-2zM7 5.500h2v5H7zM10.500 1.500h2v9h-2z" />
            </svg>
          </RailButton>
          <RailButton aria-label="Table view">
            <svg width="16" height="16" viewBox="0 0 16 16" fill="none" stroke="currentColor">
              <path d="M.5.5h15v15H.5zM.5 3.500h15M.5 7.500h15M.5 11.500h15M5.500 3.500v12M10.500 3.500v12" />
            </svg>
          </RailButton>
          <RailButton aria-label="Model view">
            <svg width="19" height="18" viewBox="0 0 19 18" fill="none" stroke="currentColor">
              <path d="M.5 5.500h7v7h-7zM.5 8h7M10.500.5h7v6h-7zM10.500 3h7M10.500 10.500h7v7h-7zM10.500 13h7M4.500 5.500v-3h6M4.500 12.500v3h6" />
            </svg>
          </RailButton>
          <RailButton aria-label="DAX query view">
            <svg width="18" height="17" viewBox="0 0 18 17" fill="none" stroke="currentColor">
              <path d="M4.500 9V2.500a2 2 0 0 1 2-2h5l4 4V11c0 2-1 3-2 4M11 .5v4h4.500M17 7v4c0 2-1 4-2 5" />
              <text x="0" y="15" fontSize="7" fontWeight="600" fill="currentColor" stroke="none">DAX</text>
            </svg>
          </RailButton>
        </Rail>

        <Center>
          <Stage>
            <PageWrap>
              <ReportPage>
                <BackButton aria-label="Back">
                  <svg width="22" height="22" viewBox="0 0 22 22" fill="none" stroke="#605e5c" strokeWidth="2">
                    <circle cx="11" cy="11" r="9.5" />
                    <path d="M17 11H6M10 6.500L5.500 11l4.500 4.500" />
                  </svg>
                </BackButton>
                <TableVisual>
                  <Table>
                    <thead>
                      <tr>
                        <th>Country</th>
                        <th>
                          AvgSalaryByCountry
                          <svg width="9" height="5" viewBox="0 0 9 5"><path d="M0 5h9L4.5 0z" fill={ink} /></svg>
                        </th>
                      </tr>
                    </thead>
                    <tbody>
                      {rows.map(([c, v]) => (
                        <tr key={v}><td>{c}</td><td>{v}</td></tr>
                      ))}
                    </tbody>
                    <tfoot>
                      <tr><td>Total</td><td>6,416.03</td></tr>
                    </tfoot>
                  </Table>
                  <VScroll $h={381} />
                </TableVisual>
                <Card>
                  <CardValue>1980</CardValue>
                  <CardCaption>HighestAvgPriceMakeYear</CardCaption>
                </Card>
              </ReportPage>
            </PageWrap>
            <Filters>
              <button aria-label="Expand filters"><DoubleChevron left /></button>
              <svg width="14" height="14" viewBox="0 0 14 14" fill="none" stroke={line} strokeWidth="1.1">
                <path d="M12.5 1.5v11L7 8.500H2.500v-3H7z" />
              </svg>
              <FiltersTitle>Filters</FiltersTitle>
            </Filters>
          </Stage>
          <PageTabs>
            <Layouts>
              <LayoutButton $active $w={24} aria-label="Desktop layout">
                <svg width="20" height="16" viewBox="0 0 20 16" fill="none" stroke="#605e5c" strokeWidth="1.2">
                  <path d="M.6 1.500h18.800v10H.6zM10 11.500v3M6 14.500h8" />
                </svg>
              </LayoutButton>
              <LayoutButton $w={24} aria-label="Mobile layout">
                <svg width="14" height="22" viewBox="0 0 14 22" fill="none" stroke="#605e5c" strokeWidth="1.2">
                  <rect x="1" y="1" width="12" height="19" rx="1" />
                  <path d="M6 17.500h2" />
                </svg>
              </LayoutButton>
              <LayoutArrow aria-label="Previous page">
                <svg width="4" height="8" viewBox="0 0 4 8"><path d="M4 0v8L0 4z" fill="#000" /></svg>
              </LayoutArrow>
              <LayoutArrow aria-label="Next page">
                <svg width="4" height="8" viewBox="0 0 4 8"><path d="M0 0v8l4-4z" fill="#b3b0ad" /></svg>
              </LayoutArrow>
            </Layouts>
            <PageTab href="#" $grow={127} $clipped>r Brand/Company/...</PageTab>
            <PageTab href="#" $grow={153}>LatestCarBaughtDate</PageTab>
            <PageTab href="#" $grow={263} $active>Average salary From a Particular Country</PageTab>
            <PageTab href="#" $grow={253}>Most Popular Car Brand for Each Gender</PageTab>
            <AddPage aria-label="New page">
              <svg width="12" height="12" viewBox="0 0 12 12"><path d="M6 1v10M1 6h10" stroke="#fff" strokeWidth="2.4" /></svg>
            </AddPage>
          </PageTabs>
        </Center>

        <Pane $w={181}>
          <PaneHead>
            <PaneTitle>Visualizations</PaneTitle>
            <button aria-label="Collapse visualizations"><DoubleChevron /></button>
          </PaneHead>
          <BuildLabel>Build visual</BuildLabel>
          <BuildTabs>
            <BuildTab $active aria-label="Build visual">
              <svg width="24" height="26" viewBox="0 0 24 26" fill="none">
                <path d="M0 1.500h19" stroke={ink} />
                <path d="M1 7h22v7H1zM1 18h22v7H1z" fill={green} stroke={ink} strokeWidth="1.4" strokeDasharray="2 1" />
              </svg>
            </BuildTab>
            <BuildTab aria-label="Format visual">
              <svg width="26" height="26" viewBox="0 0 26 26" fill="none" stroke={ink} strokeWidth="1.2">
                <path d="M6 24.500H1.500V1.500h11l6 6v3M12.500 1.500v6h6" />
                <path d="M24.500 10L16 18.500l-2-2zM16 18.500c1 3-3 6-8.500 6 3-2 2-7 6.500-8" fill="#fff" />
              </svg>
            </BuildTab>
          </BuildTabs>
          <Notch>
            <svg width="16" height="9" viewBox="0 0 16 9" fill="none" stroke="#8a8886"><path d="M0 8.500L8 .7l8 7.800" /></svg>
          </Notch>
          <Gallery>
            {gallery.map(([name, art]) => (
              <VisualButton key={name} aria-label={name}>
                <svg width="18" height="18" viewBox="0 0 18 18" fill="none" stroke={line}>{art}</svg>
              </VisualButton>
            ))}
            <VisualButton aria-label="More visuals">
              <svg width="16" height="3" viewBox="0 0 16 3" fill="#605e5c"><path d="M1 0h2v2H1zM7 0h2v2H7zM13 0h2v2h-2z" /></svg>
            </VisualButton>
          </Gallery>
          <Wells>
            <WellColumn>
              <WellLabel>Values</WellLabel>
              <DropZone>Add data fields here</DropZone>
              <WellLabel $bold>Drill through</WellLabel>
              <SwitchRow>
                Cross-report
                <Switch><input type="checkbox" />Off</Switch>
              </SwitchRow>
              <SwitchRow>
                Keep all filters
                <Switch $on><input type="checkbox" defaultChecked />On</Switch>
              </SwitchRow>
              <DropZone $tall>
                <FilterCard>
                  <div>
                    <p>Country</p>
                    <p>is (All)</p>
                  </div>
                  <FilterActions>
                    <button aria-label="Expand filter"><svg width="12" height="7" viewBox="0 0 12 7" fill="none" stroke="#2b88d8"><path d="M.5.5L6 6 11.5.5" /></svg></button>
                    <button aria-label="Remove filter"><svg width="9" height="9" viewBox="0 0 9 9" fill="none" stroke={line}><path d="M.5.5l8 8M8.500.5l-8 8" /></svg></button>
                    <button aria-label="Lock filter"><svg width="11" height="12" viewBox="0 0 11 12" fill="none" stroke="#605e5c"><path d="M.5 5.500h10v6H.5zM3.500 5.500V3a2 2 0 0 1 4 0v2.500" /></svg></button>
                  </FilterActions>
                </FilterCard>
              </DropZone>
            </WellColumn>
            <VScroll $h={184} $light />
          </Wells>
        </Pane>

        <Pane $w={181}>
          <PaneHead>
            <PaneTitle>Data</PaneTitle>
            <button aria-label="Collapse data"><DoubleChevron /></button>
          </PaneHead>
          <FieldSearch>
            <Magnifier />
            <FieldSearchInput placeholder="Search" aria-label="Search fields" />
          </FieldSearch>
          <FieldList>
            {["Cars", "Company", "Date Table", "Emplyee Details"].map((f) => (
              <FieldItem key={f}>
                <FieldButton>
                  <svg width="9" height="14" viewBox="0 0 9 14" fill="none" stroke="#797775"><path d="M1 1l6 6-6 6" /></svg>
                  <FieldIcon calc={f === "Date Table"} />
                  {f}
                </FieldButton>
              </FieldItem>
            ))}
          </FieldList>
        </Pane>
      </Work>

      <StatusBar>
        <span>Page 3 of 4</span>
        <Zoom>
          <ZoomLevel>
            <ZoomControl>
              <button aria-label="Zoom out">-</button>
              <ZoomRange type="range" min={0} max={100} defaultValue={32} aria-label="Zoom" />
              <button aria-label="Zoom in">+</button>
            </ZoomControl>
            <span>69%</span>
          </ZoomLevel>
          <button aria-label="Fit to page">
            <svg width="16" height="12" viewBox="0 0 16 12" fill="none" stroke="#605e5c">
              <path d="M.5.5h15v11H.5z" />
              <path d="M3 5V3h2M11 3h2v2M13 7v2h-2M5 9H3V7" />
            </svg>
          </button>
        </Zoom>
      </StatusBar>
    </Shell>
  );
}
